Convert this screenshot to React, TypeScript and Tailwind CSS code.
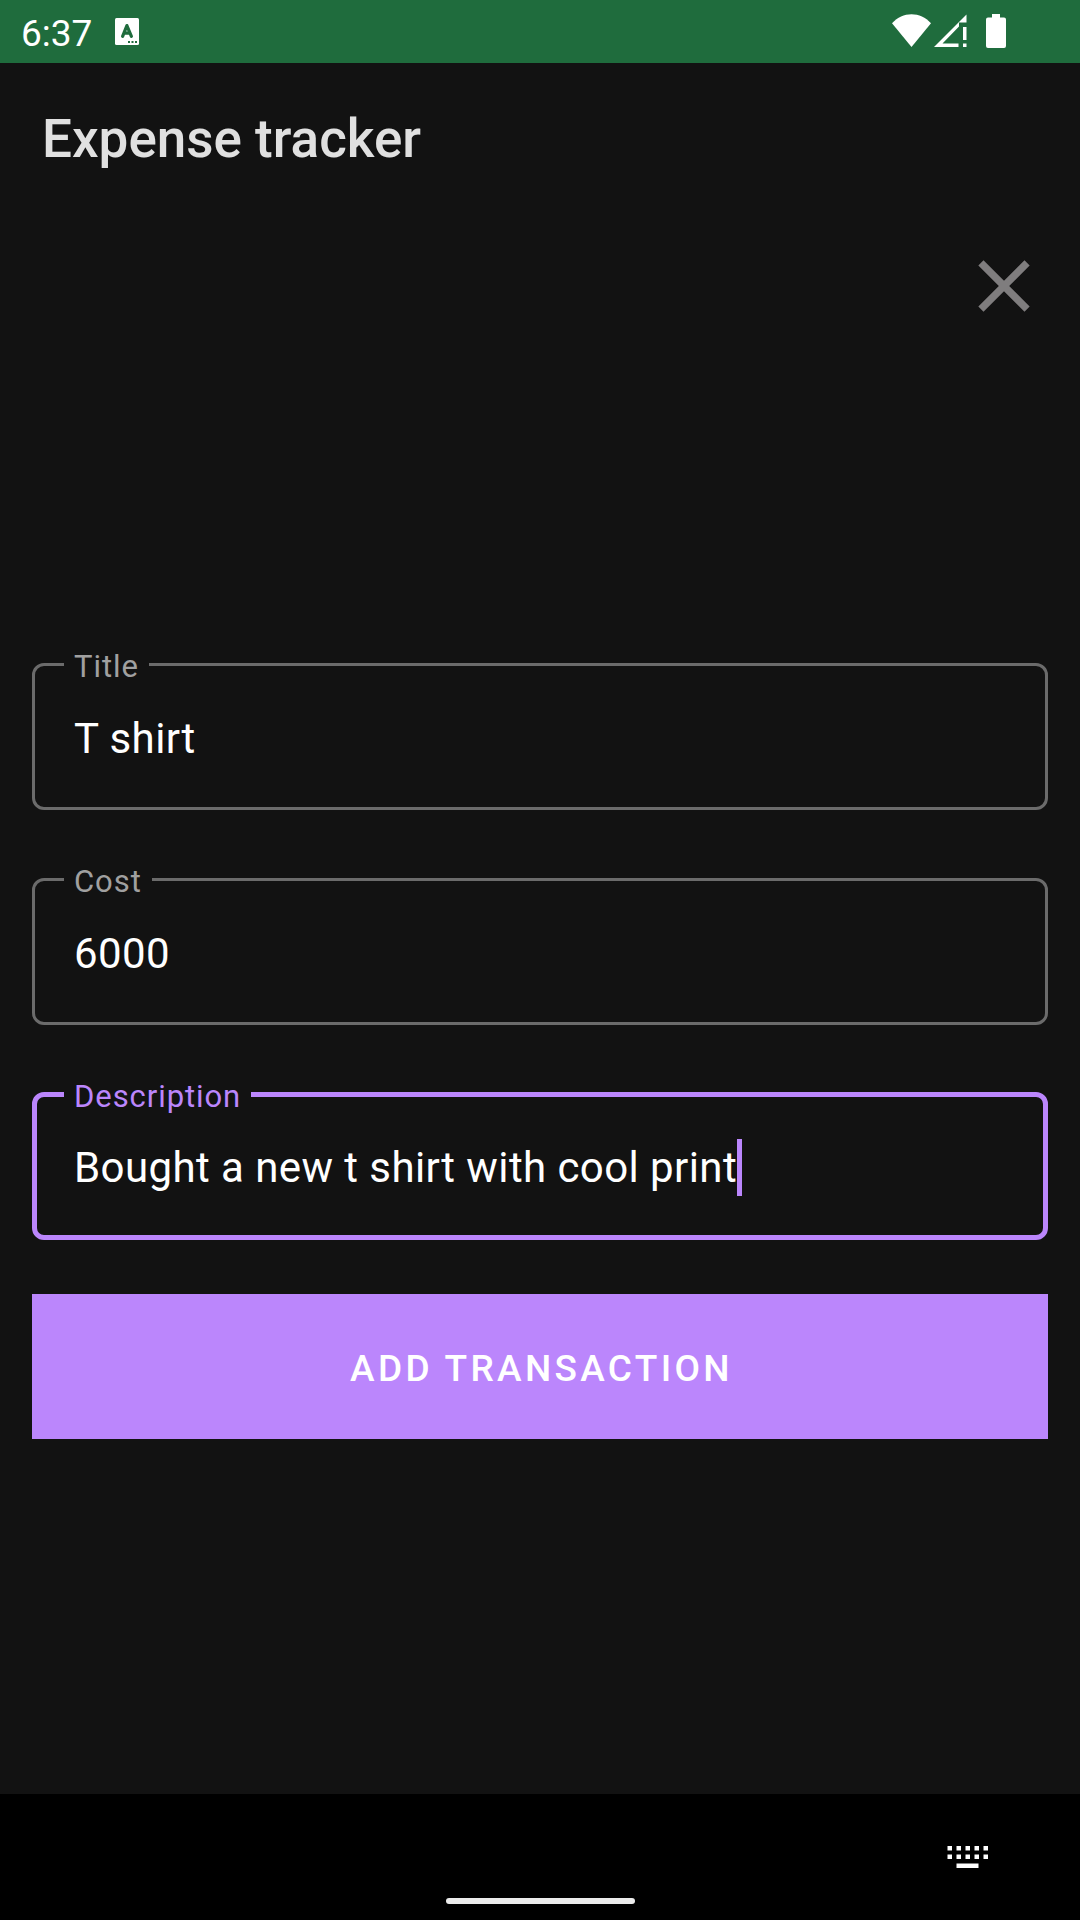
import { useState } from "react";

type FieldProps = {
  id: string;
  label: string;
  value: string;
  onChange: (value: string) => void;
  active?: boolean;
};

function Field({ id, label, value, onChange, active = false }: FieldProps) {
  return (
    <fieldset
      className={
        active
          ? "min-w-0 rounded-xl border-5 border-[#bb86fc] px-[27px]"
          : "min-w-0 rounded-xl border-3 border-[#6b6b6b] px-[29px]"
      }
    >
      <legend className="px-2.5 pt-[5px]">
        <label
          htmlFor={id}
          className={
            active
              ? "block text-[31px] leading-[38px] tracking-[0.03em] text-[#bb86fc]"
              : "block text-[31px] leading-[38px] tracking-[0.03em] text-[#a0a0a0]"
          }
        >
          {label}
        </label>
      </legend>
      <div
        className={
          active
            ? "flex h-[119px] items-center pb-4 pl-2.5"
            : "flex h-[121px] items-center pb-4 pl-2.5"
        }
      >
        <input
          id={id}
          type="text"
          value={value}
          onChange={(e) => onChange(e.target.value)}
          className={
            active
              ? "h-[57px] max-w-full bg-transparent text-[42px] tracking-[0.01em] text-white caret-transparent outline-none [field-sizing:content]"
              : "h-[57px] w-full bg-transparent text-[42px] tracking-[0.01em] text-white outline-none"
          }
        />
        {active && <span className="h-[57px] w-[5px] shrink-0 bg-[#bb86fc]" />}
      </div>
    </fieldset>
  );
}

function StatusBar() {
  return (
    <div className="flex h-[63px] items-center bg-[#1f6c3d] pr-[74px] pl-[21px] text-white">
      <span className="pt-1 text-[37px] leading-[59px]">6:37</span>
      <svg className="ml-[23px] h-[27px] w-6" viewBox="0 0 24 27" aria-hidden="true">
        <rect width="24" height="27" rx="1.5" fill="currentColor" />
        <path d="M7.6 18.300 11.900 7.600 16.400 18.300M8.800 15.200h6" fill="none" stroke="#1f6c3d" strokeWidth="3.200" strokeLinecap="round" strokeLinejoin="round" />
        <path d="M13 23h2v2h-2zM16.500 23h2v2h-2zM20 23h2v2h-2z" fill="#1f6c3d" />
      </svg>
      <div className="mb-px ml-auto flex items-center">
        <svg className="h-[34px] w-[39px]" viewBox="0 0 39 34" fill="currentColor" aria-hidden="true">
          <path d="M19.500 33 0 9.200C5.500 3.200 12.200 0.200 19.500 0.200S33.500 3.200 39 9.200Z" />
        </svg>
        <svg className="ml-[3px] h-[34px] w-[34px]" viewBox="0 0 34 34" fill="currentColor" aria-hidden="true">
          <path d="M0 33 32.500 0.500V8.500H25V12.500L8.500 29.500H24.500V33Z" />
          <path d="M29 13h3.500v13H29zM29 29.500h3.500V33H29z" />
        </svg>
        <svg className="ml-[18px] h-[34px] w-5" viewBox="0 0 20 34" fill="currentColor" aria-hidden="true">
          <path d="M6 0h8v3.500h4a2 2 0 0 1 2 2V32a2 2 0 0 1-2 2H2a2 2 0 0 1-2-2V5.500a2 2 0 0 1 2-2h4Z" />
        </svg>
      </div>
    </div>
  );
}

export default function App() {
  const [title, setTitle] = useState("T shirt");
  const [cost, setCost] = useState("6000");
  const [description, setDescription] = useState("Bought a new t shirt with cool print");

  return (
    <div className="flex min-h-screen flex-col bg-[#121212] font-['Roboto',sans-serif]">
      <StatusBar />
      <header className="flex h-[147px] items-center px-[42px] pt-1.5">
        <h1 className="text-[53px] font-medium text-[#e0e0e0]">Expense tracker</h1>
      </header>
      <main className="flex flex-1 flex-col px-8 pt-8">
        <button type="button" aria-label="Close" className="size-[88px] self-end text-[#7f7d7e]">
          <svg className="size-full" viewBox="0 0 24 24" fill="currentColor" aria-hidden="true">
            <path d="M19 6.410 17.590 5 12 10.590 6.410 5 5 6.410 10.590 12 5 17.590 6.410 19 12 13.410 17.590 19 19 17.590 13.410 12z" />
          </svg>
        </button>
        <form className="mt-[313px] flex flex-col gap-12" onSubmit={(e) => e.preventDefault()}>
          <Field id="title" label="Title" value={title} onChange={setTitle} />
          <Field id="cost" label="Cost" value={cost} onChange={setCost} />
          <Field id="description" label="Description" value={description} onChange={setDescription} active />
          <button
            type="submit"
            className="mt-1.5 h-[145px] bg-[#bb86fc] pt-1 pl-[3px] text-[37px] font-medium tracking-[0.09em] text-white uppercase"
          >
            Add transaction
          </button>
        </form>
      </main>
      <footer className="flex h-[126px] flex-col items-center bg-black pb-4">
        <button type="button" aria-label="Switch keyboard" className="mt-[51px] mr-[91px] self-end text-white">
          <svg className="h-6 w-[42px]" viewBox="0 0 42 24" fill="currentColor" aria-hidden="true">
            <path d="M0.500 1h4.500v4.500h-4.500zM9.500 1h4.500v4.500h-4.500zM18.500 1h4.500v4.500h-4.500zM27.500 1h4.500v4.500h-4.500zM36.500 1h4.500v4.500h-4.500z" />
            <path d="M0.500 9.500h4.500v4.500h-4.500zM9.500 9.500h4.500v4.500h-4.500zM18.500 9.500h4.500v4.500h-4.500zM27.500 9.500h4.500v4.500h-4.500zM36.500 9.500h4.500v4.500h-4.500z" />
            <path d="M9.500 18.500h22V23h-22z" />
          </svg>
        </button>
        <div className="mt-auto h-1.5 w-[189px] rounded-full bg-[#ebebeb]" />
      </footer>
    </div>
  );
}
